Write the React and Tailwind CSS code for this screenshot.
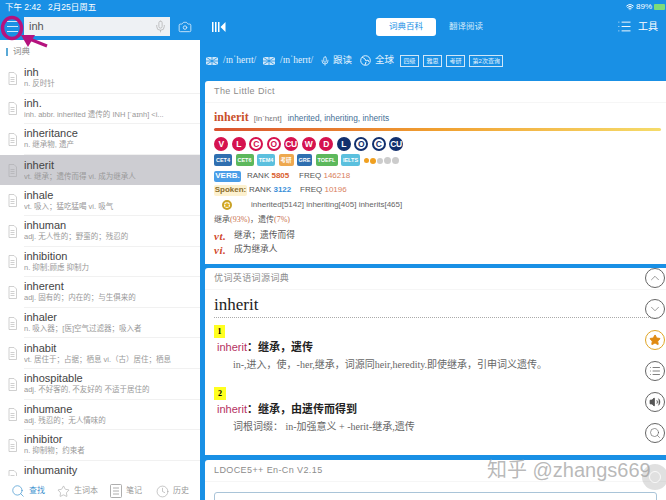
import { ChevronUp, ChevronDown, Star, List, Volume2, Search, Mic, Camera, Clock, Wifi } from "lucide-react";

const cjk = "font-['Liberation_Sans','Noto_Sans_CJK_SC',sans-serif]";
const serif = "font-['Liberation_Serif','Noto_Sans_CJK_SC',serif]";

const words = [
  ["inh", "n. 反时针"],
  ["inh.", "inh.  abbr.  inherited 遗传的   INH [ˈaɪnh]  <i..."],
  ["inheritance", "n. 继承物, 遗产"],
  ["inherit", "vt. 继承；遗传而得 vi. 成为继承人"],
  ["inhale", "vt. 吸入；猛吃猛喝 vi. 吸气"],
  ["inhuman", "adj. 无人性的；野蛮的；残忍的"],
  ["inhibition", "n. 抑制;顾虑 抑制力"],
  ["inherent", "adj. 固有的；内在的；与生俱来的"],
  ["inhaler", "n. 吸入器；[医]空气过滤器；吸入者"],
  ["inhabit", "vt. 居住于；占据；栖息 vi.（古）居住；栖息"],
  ["inhospitable", "adj. 不好客的, 不友好的 不适于居住的"],
  ["inhumane", "adj. 残忍的；无人情味的"],
  ["inhibitor", "n. 抑制物；约束者"],
  ["inhumanity", ""],
];

const circlesA = [
  ["V", "#d5134f"], ["L", "#d5134f"], ["C", "#d5134f"], ["O", "#d5134f"], ["CU", "#d5134f"], ["W", "#d5134f"], ["D", "#d5134f"],
  ["L", "#12306e"], ["O", "#12306e"], ["C", "#12306e"], ["CU", "#12306e"],
];

const tags = [
  ["CET4", "bg-[#2f6fb0]", "w-[18px]"], ["CET6", "bg-[#5cb85c]", "w-[18px]"], ["TEM4", "bg-[#5bc0de]", "w-[18px]"], ["考研", "bg-[#eea84f]", "w-[15px]"],
  ["GRE", "bg-[#2f6fb0]", "w-[15px]"], ["TOEFL", "bg-[#5cb85c]", "w-[22px]"], ["IELTS", "bg-[#5bc0de]", "w-[19px]"],
];

function DocIcon({ faint }) {
  return (
    <svg width="9" height="13" viewBox="0 0 9 13" fill="none" stroke={faint ? "#b4b4b8" : "#c4c4c4"} strokeWidth="0.8" className="shrink-0">
      <path d="M1 .5h5l2.500 2.500v9.500h-7.500z" />
      <path d="M2.500 5.500h4M2.500 7.500h4M2.500 9.500h4" />
    </svg>
  );
}

function Flag() {
  return (
    <svg width="12" height="8" viewBox="0 0 12 8" className="shrink-0">
      <rect width="12" height="8" fill="#cfe6f8" />
      <path d="M0 4h12M6 0v8M0 0l12 8M12 0L0 8" stroke="#1990e5" strokeWidth="0.8" />
    </svg>
  );
}

function WordRow({ word, def, active }) {
  return (
    <div className={`h-[30.6px] shrink-0 flex items-center gap-[7px] pl-2 ${active ? "bg-[#cdcdd2]" : "bg-white"}`}>
      <DocIcon faint={active} />
      <div className={`min-w-0 flex-1 pr-2 h-full flex flex-col justify-center ${active ? "" : "border-b border-[#f1f1f1]"}`}>
        <div className="text-[11px] leading-[13px] text-[#444]">{word}</div>
        <div className="h-[10px] text-[7.500px] leading-[10px] text-[#999] whitespace-nowrap overflow-hidden">{def}</div>
      </div>
    </div>
  );
}

function Dot({ label, color, outline }) {
  return (
    <span
      className="w-[14px] h-[14px] rounded-full flex items-center justify-center text-[8.500px] font-bold leading-none tracking-[-0.5px]"
      style={{ background: outline ? "#fff" : color, color: outline ? color : "#fff", border: `2.500px solid ${color}` }}
    >
      {label}
    </span>
  );
}

function SideButton({ children, className = "border-[#666] text-[#555]" }) {
  return <div className={`w-5 h-5 rounded-full border flex items-center justify-center bg-white/80 ${className}`}>{children}</div>;
}

function CardTitle({ children }) {
  return <div className="h-[22px] flex items-center px-[9px] text-[9px] tracking-[0.4px] text-[#8c8c8c] border-b border-[#f6f6f6]">{children}</div>;
}

export default function App() {
  return (
    <div className={`relative w-[666px] h-[500px] overflow-hidden bg-[#1990e5] ${cjk}`}>
      {/* status + nav */}
      <div className="h-[40px] flex flex-col text-white">
        <div className="h-[14px] flex items-center justify-between pl-[5px] pr-[1px] text-[8.500px]">
          <span>下午 2:42&nbsp;&nbsp;&nbsp;2月25日周五</span>
          <span className="flex items-center gap-[2px] text-[8px]">
            <Wifi size={8} strokeWidth={3} />
            89%
            <span className="w-[11px] h-[6px] bg-[#7ddc7a] rounded-[1px]" />
          </span>
        </div>
        <div className="flex-1 flex items-center pb-[1px]">
          <div className="w-[24px] flex justify-center">
            <div className="w-[11px] h-[11px] flex flex-col justify-between">
              <span className="h-px bg-[#cfe8fb]" />
              <span className="h-px bg-[#cfe8fb]" />
              <span className="h-px bg-[#cfe8fb]" />
            </div>
          </div>
          <div className="w-[146px] h-[19px] bg-[#eef1f4] flex items-center justify-between pl-[5px] pr-[3px]">
            <span className="text-[11px] text-[#555]">inh</span>
            <Mic size={13} className="text-[#b5b5b5]" strokeWidth={1.500} />
          </div>
          <div className="w-[30px] flex justify-center">
            <Camera size={14} strokeWidth={1.500} className="text-[#d8ecfb]" />
          </div>
          <div className="flex-1 relative flex items-center justify-center">
            <svg width="14" height="10" viewBox="0 0 14 10" fill="#fff" className="absolute left-[12px]">
              <path d="M0 0h1.500v10H0zM3 0h1.500v10H3zM6 0h1.500v10H6zM13.500 0v10L8.500 5z" />
            </svg>
            <div className="flex items-center ml-[6px] text-[8.500px]">
              <div className="w-[60px] h-[18px] bg-white rounded-[3px] flex items-center justify-center text-[#1990e5]">词典百科</div>
              <div className="w-[60px] h-[18px] flex items-center justify-center text-[#d4ebfb]">翻译阅读</div>
            </div>
            <div className="absolute right-[8px] flex items-center gap-[6px] text-[10px]">
              <List size={15} strokeWidth={1.500} />
              <span>工具</span>
            </div>
          </div>
        </div>
      </div>

      <div className="h-[460px] flex">
        {/* word list */}
        <div className="w-[200px] shrink-0 bg-white flex flex-col">
          <div className="h-[23px] shrink-0 flex items-center pl-[6px]">
            <span className="w-[2px] h-[8px] bg-[#5aa9d6] mr-[5px]" />
            <span className="text-[8.500px] text-[#888]">词典</span>
          </div>
          <div className="flex-1 min-h-0 overflow-hidden flex flex-col">
            {words.map(([w, d]) => (
              <WordRow key={w} word={w} def={d} active={w === "inherit"} />
            ))}
          </div>
          <div className="h-[24px] shrink-0 bg-white flex items-center pl-[11px] pt-[6px] text-[8px] text-[#999]">
            <span className="w-[46px] flex items-center gap-[4px] text-[#3f93cf]"><Search size={14} strokeWidth={1.200} />查找</span>
            <span className="w-[53px] flex items-center gap-[4px]"><Star size={13} strokeWidth={1} />生词本</span>
            <span className="w-[46px] flex items-center gap-[4px]">
              <svg width="12" height="14" viewBox="0 0 12 14" fill="none" stroke="#999" strokeWidth="0.8">
                <rect x=".5" y=".5" width="11" height="13" rx="1" />
                <path d="M3 4h6M3 7h6M3 10h6" />
              </svg>
              笔记
            </span>
            <span className="flex items-center gap-[4px]"><Clock size={13} strokeWidth={1} />历史</span>
          </div>
        </div>

        {/* dictionary panel */}
        <div className="flex-1 min-w-0 pl-[5px] flex flex-col">
          <div className="h-[41px] shrink-0 flex items-center text-[#e3f2fd] text-[9.500px]">
            <span className="ml-[1px] mr-[5px]"><Flag /></span>
            <span className={`${serif} w-[40px]`}>/ɪnˈherɪt/</span>
            <span className="mr-[5px]"><Flag /></span>
            <span className={`${serif} w-[40px]`}>/ɪnˈherɪt/</span>
            <Mic size={10} className="mr-[3px]" />
            <span className="w-[27px]">跟读</span>
            <svg width="11" height="11" viewBox="0 0 11 11" fill="none" stroke="currentColor" strokeWidth="1" className="mr-[4px]">
              <circle cx="5.500" cy="5.500" r="4.800" />
              <path d="M2 2l3 2 1 2 2-1 1 2M5 10l1-3" />
            </svg>
            <span className="w-[25px]">全球</span>
            <span className="flex gap-[4px] text-[6px] leading-none">
              <span className="border border-[#cfe6f8] px-[2.500px] py-[2px]">四级</span>
              <span className="border border-[#cfe6f8] px-[2.500px] py-[2px]">雅思</span>
              <span className="border border-[#cfe6f8] px-[2.500px] py-[2px]">考研</span>
              <span className="border border-[#cfe6f8] px-[2.500px] py-[2px]">第2次查询</span>
            </span>
          </div>

          {/* The Little Dict */}
          <div className="h-[183px] shrink-0 bg-white rounded-tl-[3px]">
            <CardTitle>The Little Dict</CardTitle>
            <div className="px-[9px] pt-[5px]">
              <div className="flex items-baseline h-[17px]">
                <span className={`${serif} text-[12px] font-bold text-[#c9502c] mr-[5px]`}>inherit</span>
                <span className="text-[8px] text-[#777] mr-[6px]">[in`hεnt]</span>
                <span className="text-[8.300px] text-[#456f96]">inherited, inheriting, inherits</span>
              </div>
              <div className="h-[3px] w-[447px] mt-[3px] rounded-sm bg-gradient-to-r from-[#d9502e] via-[#f0a030] to-[#f5dc6a]" />
              <div className="flex gap-[3.500px] mt-[6px]">
                {circlesA.map(([l, c], i) => (
                  <Dot key={i} label={l} color={c} outline={i === 2 || i === 3 || i === 8 || i === 9} />
                ))}
              </div>
              <div className="flex items-center gap-[3.500px] mt-[3px]">
                {tags.map(([t, bg, w]) => (
                  <span key={t} className={`${bg} ${w} h-[12px] rounded-[2px] text-white text-[5.500px] font-bold flex items-center justify-center`}>{t}</span>
                ))}
                <span className="flex items-center gap-[1px] mt-[1px]">
                  <span className="w-[5px] h-[5px] rounded-full bg-[#f0a020]" />
                  <span className="w-[6px] h-[6px] rounded-full bg-[#f0a020]" />
                  <span className="w-[6px] h-[6px] rounded-full bg-[#ccc]" />
                  <span className="w-[7px] h-[7px] rounded-full bg-[#ccc]" />
                  <span className="w-[7px] h-[7px] rounded-full bg-[#ccc]" />
                </span>
              </div>
              <div className="flex items-center h-[12px] mt-[4px] text-[8px] text-[#555]">
                <span className="w-[27px] h-[11px] bg-[#4a9ee8] rounded-[2px] text-white font-bold flex items-center justify-center mr-[6px]">VERB.</span>
                <span className="w-[52px]">RANK <b className="text-[#d9602e]">5805</b></span>
                <span>FREQ <span className="text-[#d9805e]">146218</span></span>
              </div>
              <div className="flex items-center h-[12px] mt-[2px] text-[8px] text-[#555]">
                <span className="w-[33px] h-[11px] bg-[#fdf1cf] rounded-[2px] text-[#8a6d2b] font-bold flex items-center justify-center mr-[2px]">Spoken:</span>
                <span className="w-[51px]">RANK <b className="text-[#3a8fd9]">3122</b></span>
                <span>FREQ <span className="text-[#d9805e]">10196</span></span>
              </div>
              <div className="flex items-center h-[15px] mt-[1px] text-[8px] text-[#666]">
                <span className="ml-[8px] mr-[19px] w-[10px] h-[10px] rounded-full border-[2px] border-[#c9a227] flex items-center justify-center">
                  <Star size={6} fill="#e0b020" stroke="#e0b020" />
                </span>
                inherited[5142] inheriting[405] inherits[465]
              </div>
              <div className="h-[16px] flex items-center text-[8px] text-[#555]">
                继承<span className={`${serif} text-[#c9704e]`}>(93%)</span>，遗传<span className={`${serif} text-[#c9704e]`}>(7%)</span>
              </div>
              <div className="h-[14px] mt-[1px] flex items-center text-[8.700px] text-[#555]">
                <b className={`${serif} italic text-[#d0472c] w-[20px] text-[11px] tracking-[0.5px]`}>vt.</b>继承；遗传而得
              </div>
              <div className="h-[14px] flex items-center text-[8.700px] text-[#555]">
                <b className={`${serif} italic text-[#d0472c] w-[20px] text-[11px] tracking-[0.5px]`}>vi.</b>成为继承人
              </div>
            </div>
          </div>

          {/* etymology */}
          <div className="mt-[4px] h-[187px] shrink-0 bg-white rounded-tl-[3px]">
            <CardTitle>优词英语词源词典</CardTitle>
            <div className={`${serif} h-[28px] mx-[9px] pt-[3px] flex items-center text-[17px] text-[#222] border-b border-dotted border-[#aaa]`}>inherit</div>
            <div className="px-[9px] pt-[7px]">
              <span className={`${serif} block w-[11px] h-[13px] bg-[#ffff20] text-[8px] font-bold text-center leading-[13px]`}>1</span>
              <div className="mt-[2px] pl-[3px] text-[11px] leading-[14px] font-bold text-[#222]"><span className="text-[#b5315f] font-medium">inherit</span>：继承，遗传</div>
              <div className={`${serif} mt-[4px] pl-[19px] text-[10px] leading-[13px] text-[#666]`}>in-,进入，使，-her,继承，词源同heir,heredity.即使继承，引申词义遗传。</div>
              <span className={`${serif} block mt-[16px] w-[12px] h-[13px] bg-[#ffff20] text-[8px] font-bold text-center leading-[13px]`}>2</span>
              <div className="mt-[2px] pl-[3px] text-[11px] leading-[14px] font-bold text-[#222]"><span className="text-[#b5315f] font-medium">inherit</span>：继承，由遗传而得到</div>
              <div className={`${serif} mt-[4px] pl-[19px] text-[10px] leading-[13px] text-[#666]`}>词根词缀： in-加强意义 + -herit-继承,遗传</div>
            </div>
          </div>

          {/* LDOCE */}
          <div className="mt-[5px] flex-1 min-h-0 bg-white rounded-tl-[3px] overflow-hidden">
            <CardTitle>LDOCE5++ En-Cn V2.15</CardTitle>
            <div className="mx-[9px] mt-[10px] h-[20px] border border-[#a9c4d8] rounded-[3px]" />
          </div>
        </div>
      </div>

      {/* floating buttons */}
      <div className="absolute left-[645px] top-[268px] flex flex-col gap-[11px]">
        <SideButton><ChevronUp size={14} strokeWidth={1} /></SideButton>
        <SideButton><ChevronDown size={14} strokeWidth={1} /></SideButton>
        <SideButton className="border-[#e0a526] text-[#e08a10]"><Star size={12} fill="#e08a10" /></SideButton>
        <SideButton><List size={12} strokeWidth={1.500} /></SideButton>
        <SideButton><Volume2 size={12} fill="#555" strokeWidth={1.500} /></SideButton>
        <SideButton><Search size={12} strokeWidth={1.200} /></SideButton>
      </div>

      {/* assistive touch */}
      <div className="absolute left-[642px] top-[464px] w-[26px] h-[26px] rounded-full bg-[#999]/30 flex items-center justify-center">
        <span className="w-[12px] h-[12px] rounded-full border border-white/80" />
      </div>

      {/* watermark */}
      <div className="absolute left-[487px] top-[458px] text-[20px] leading-[24px] text-[#9a9a9a]/70 whitespace-nowrap">知乎 @zhangs669</div>

      {/* pink annotation */}
      <svg width="60" height="50" viewBox="0 0 60 50" fill="none" className="absolute left-0 top-[12px]">
        <ellipse cx="12" cy="16" rx="9.500" ry="10.500" stroke="#b5127e" strokeWidth="3.500" />
        <path d="M47 34L27 26" stroke="#b5127e" strokeWidth="3" />
        <path d="M21 23L35 23L28 35Z" fill="#b5127e" />
      </svg>
    </div>
  );
}
